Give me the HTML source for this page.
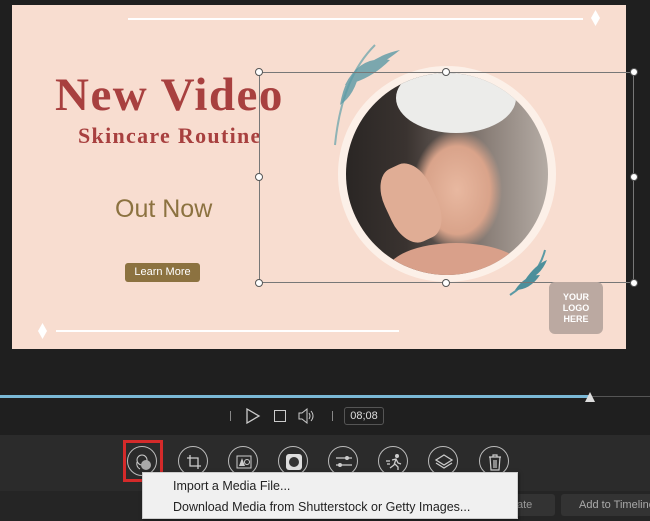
<!DOCTYPE html>
<html><head><meta charset="utf-8"><style>
*{margin:0;padding:0;box-sizing:border-box}
body{width:650px;height:521px;background:#1f1f1f;position:relative;overflow:hidden;font-family:"Liberation Sans",sans-serif}
.a{position:absolute}
.h{position:absolute;width:8px;height:8px;border:1px solid #555;border-radius:50%;background:#fff}
.ic{position:absolute;top:446px;width:30px;height:30px;border:1px solid #bbb;border-radius:50%}
.ic svg{position:absolute;left:6px;top:6px}
</style></head><body>
<div class="a" style="left:12px;top:5px;width:614px;height:344px;background:#f8ddd0"></div>
<div class="a" style="left:128px;top:18px;width:455px;height:2px;background:#fff"></div>
<div class="a" style="left:591px;top:10px;width:9px;height:16px;background:#fff;clip-path:polygon(50% 0,100% 50%,50% 100%,0 50%)"></div>
<div class="a" style="left:56px;top:330px;width:343px;height:2px;background:#fff"></div>
<div class="a" style="left:38px;top:323px;width:9px;height:16px;background:#fff;clip-path:polygon(50% 0,100% 50%,50% 100%,0 50%)"></div>
<div class="a" style="left:55px;top:68px;font-family:'Liberation Serif',serif;font-weight:bold;font-size:47px;color:#a8403f;letter-spacing:1.5px">New Video</div>
<div class="a" style="left:78px;top:123px;font-family:'Liberation Serif',serif;font-weight:bold;font-size:22px;color:#a8403f;letter-spacing:1.3px">Skincare Routine</div>
<div class="a" style="left:115px;top:195px;font-size:25px;color:#8c7240">Out Now</div>
<div class="a" style="left:125px;top:263px;width:75px;height:19px;background:#8c7240;border-radius:3px;color:#fff;font-size:11px;text-align:center;line-height:19px">Learn More</div>
<svg class="a" style="left:315px;top:35px" width="90" height="115"><path d="M60 10 C40 30 25 60 20 110" stroke="#8fb3b5" stroke-width="2" fill="none"/><path d="M30 50 Q45 20 75 25 Q55 45 30 50Z M40 40 Q60 20 85 15 Q60 35 40 40Z M25 70 Q30 40 45 35 Q40 60 25 70Z" fill="#5b9aa5" opacity=".8"/></svg>
<svg class="a" style="left:505px;top:245px" width="50" height="55"><path d="M40 5 C35 25 20 40 5 50" stroke="#5b9aa5" stroke-width="2" fill="none"/><path d="M10 45 Q20 30 35 30 Q25 45 10 45Z M20 35 Q30 20 42 15 Q35 32 20 35Z" fill="#4d8f9b"/></svg>
<div class="a" style="left:338px;top:66px;width:218px;height:216px;border-radius:50%;background:#fcf0e8"></div>
<div class="a" style="left:346px;top:73px;width:202px;height:202px;border-radius:50%;overflow:hidden;background:radial-gradient(ellipse 60px 80px at 55% 58%,#e8b8a0 0%,#d9a38a 55%,transparent 75%),linear-gradient(90deg,#2a2624 0%,#3a3330 30%,#8a7f78 70%,#b5aca5 100%)">
<div class="a" style="left:50px;top:-10px;width:120px;height:70px;border-radius:50%;background:#ececea"></div>
<div class="a" style="left:40px;top:90px;width:50px;height:80px;border-radius:40%;background:#e0ad95;transform:rotate(-25deg)"></div>
<div class="a" style="left:40px;top:170px;width:140px;height:60px;border-radius:50%;background:#d9a08a"></div>
</div>
<div class="a" style="left:259px;top:72px;width:375px;height:211px;border:1px solid #777"></div>
<div class="h" style="left:255px;top:68px"></div><div class="h" style="left:442px;top:68px"></div><div class="h" style="left:630px;top:68px"></div>
<div class="h" style="left:255px;top:173px"></div><div class="h" style="left:630px;top:173px"></div>
<div class="h" style="left:255px;top:279px"></div><div class="h" style="left:442px;top:279px"></div><div class="h" style="left:630px;top:279px"></div>
<div class="a" style="left:549px;top:282px;width:54px;height:52px;background:#bba9a1;border-radius:6px;color:#fff;font-size:9px;font-weight:bold;text-align:center;line-height:11px;padding-top:10px">YOUR<br>LOGO<br>HERE</div>
<div class="a" style="left:0;top:395px;width:590px;height:3px;background:#7ab8d6"></div>
<div class="a" style="left:590px;top:396px;width:60px;height:1px;background:#555"></div>
<div class="a" style="left:585px;top:392px;width:10px;height:10px;background:#ddd;clip-path:polygon(50% 0,100% 100%,0 100%)"></div>
<div class="a" style="left:230px;top:411px;width:1px;height:10px;background:#888"></div>
<svg class="a" style="left:245px;top:408px" width="16" height="16"><path d="M2 1 L14 8 L2 15Z" fill="none" stroke="#ccc" stroke-width="1.3"/></svg>
<div class="a" style="left:274px;top:410px;width:12px;height:12px;border:1.3px solid #ccc"></div>
<svg class="a" style="left:297px;top:408px" width="18" height="16"><path d="M2 5h3l5-4v14l-5-4H2Z" fill="none" stroke="#ccc"/><path d="M12 5q2 3 0 6M14 3q4 5 0 10" fill="none" stroke="#ccc"/></svg>
<div class="a" style="left:332px;top:411px;width:1px;height:10px;background:#888"></div>
<div class="a" style="left:344px;top:407px;width:40px;height:18px;border:1px solid #555;border-radius:3px;color:#ddd;font-size:11px;text-align:center;line-height:16px">08;08</div>
<div class="a" style="left:0;top:435px;width:650px;height:56px;background:#2b2b2b"></div>
<div class="ic" style="left:127px"><svg width="18" height="18"><circle cx="8" cy="7" r="5" fill="none" stroke="#ccc"/><circle cx="12" cy="12" r="5" fill="#aaa"/><path d="M3 9q-1 5 3 7" fill="none" stroke="#ccc"/></svg></div>
<div class="a" style="left:123px;top:440px;width:40px;height:42px;border:3px solid #d42a2a"></div>
<div class="ic" style="left:178px"><svg width="18" height="18"><path d="M5 2v11h11M2 5h11v11" fill="none" stroke="#ccc" stroke-width="1.3"/></svg></div>
<div class="ic" style="left:228px"><svg width="18" height="18"><rect x="2" y="3" width="14" height="12" fill="none" stroke="#ccc"/><path d="M4 13l3-8 3 8Z" fill="#ccc"/><circle cx="12" cy="9" r="2.5" fill="none" stroke="#ccc"/></svg></div>
<div class="ic" style="left:278px"><svg width="18" height="18"><rect x="1" y="1" width="16" height="16" rx="3" fill="#ddd"/><circle cx="9" cy="9" r="5" fill="#333"/></svg></div>
<div class="ic" style="left:328px"><svg width="18" height="18"><path d="M1 5h16M1 12h16" stroke="#ccc" stroke-width="1.3"/><circle cx="12" cy="5" r="2" fill="#ccc"/><circle cx="5" cy="12" r="2" fill="#ccc"/></svg></div>
<div class="ic" style="left:378px"><svg width="18" height="18"><circle cx="12" cy="3" r="2" fill="#ccc"/><path d="M7 7l4-1 2 4 3 1M11 6l-2 6-4 3M10 11l3 3v3M1 8h4M2 11h3" fill="none" stroke="#ccc" stroke-width="1.3"/></svg></div>
<div class="ic" style="left:428px"><svg width="18" height="18"><path d="M9 2l8 5-8 5-8-5Z M1 10l8 5 8-5" fill="none" stroke="#ccc" stroke-width="1.2"/></svg></div>
<div class="ic" style="left:479px"><svg width="18" height="18"><path d="M3 4h12M7 4V2h4v2M4 4l1 13h8l1-13M8 7v8M10 7v8" fill="none" stroke="#ccc" stroke-width="1.2"/></svg></div>
<div class="a" style="left:0;top:491px;width:650px;height:30px;background:#252525"></div>
<div class="a" style="left:505px;top:494px;width:50px;height:22px;background:#333;border-radius:3px;color:#999;font-size:11px;line-height:22px;padding-left:12px">ate</div>
<div class="a" style="left:561px;top:494px;width:95px;height:22px;background:#333;border-radius:3px;color:#aaa;font-size:11px;line-height:22px;padding-left:18px;white-space:nowrap">Add to Timeline</div>
<div class="a" style="left:142px;top:472px;width:376px;height:47px;background:#f0f0f0;border:1px solid #ccc;box-shadow:1px 1px 3px rgba(0,0,0,.5);font-size:12.5px;color:#222">
<div class="a" style="left:30px;top:6px;white-space:nowrap">Import a Media File...</div>
<div class="a" style="left:30px;top:27px;white-space:nowrap">Download Media from Shutterstock or Getty Images...</div></div>
</body></html>
